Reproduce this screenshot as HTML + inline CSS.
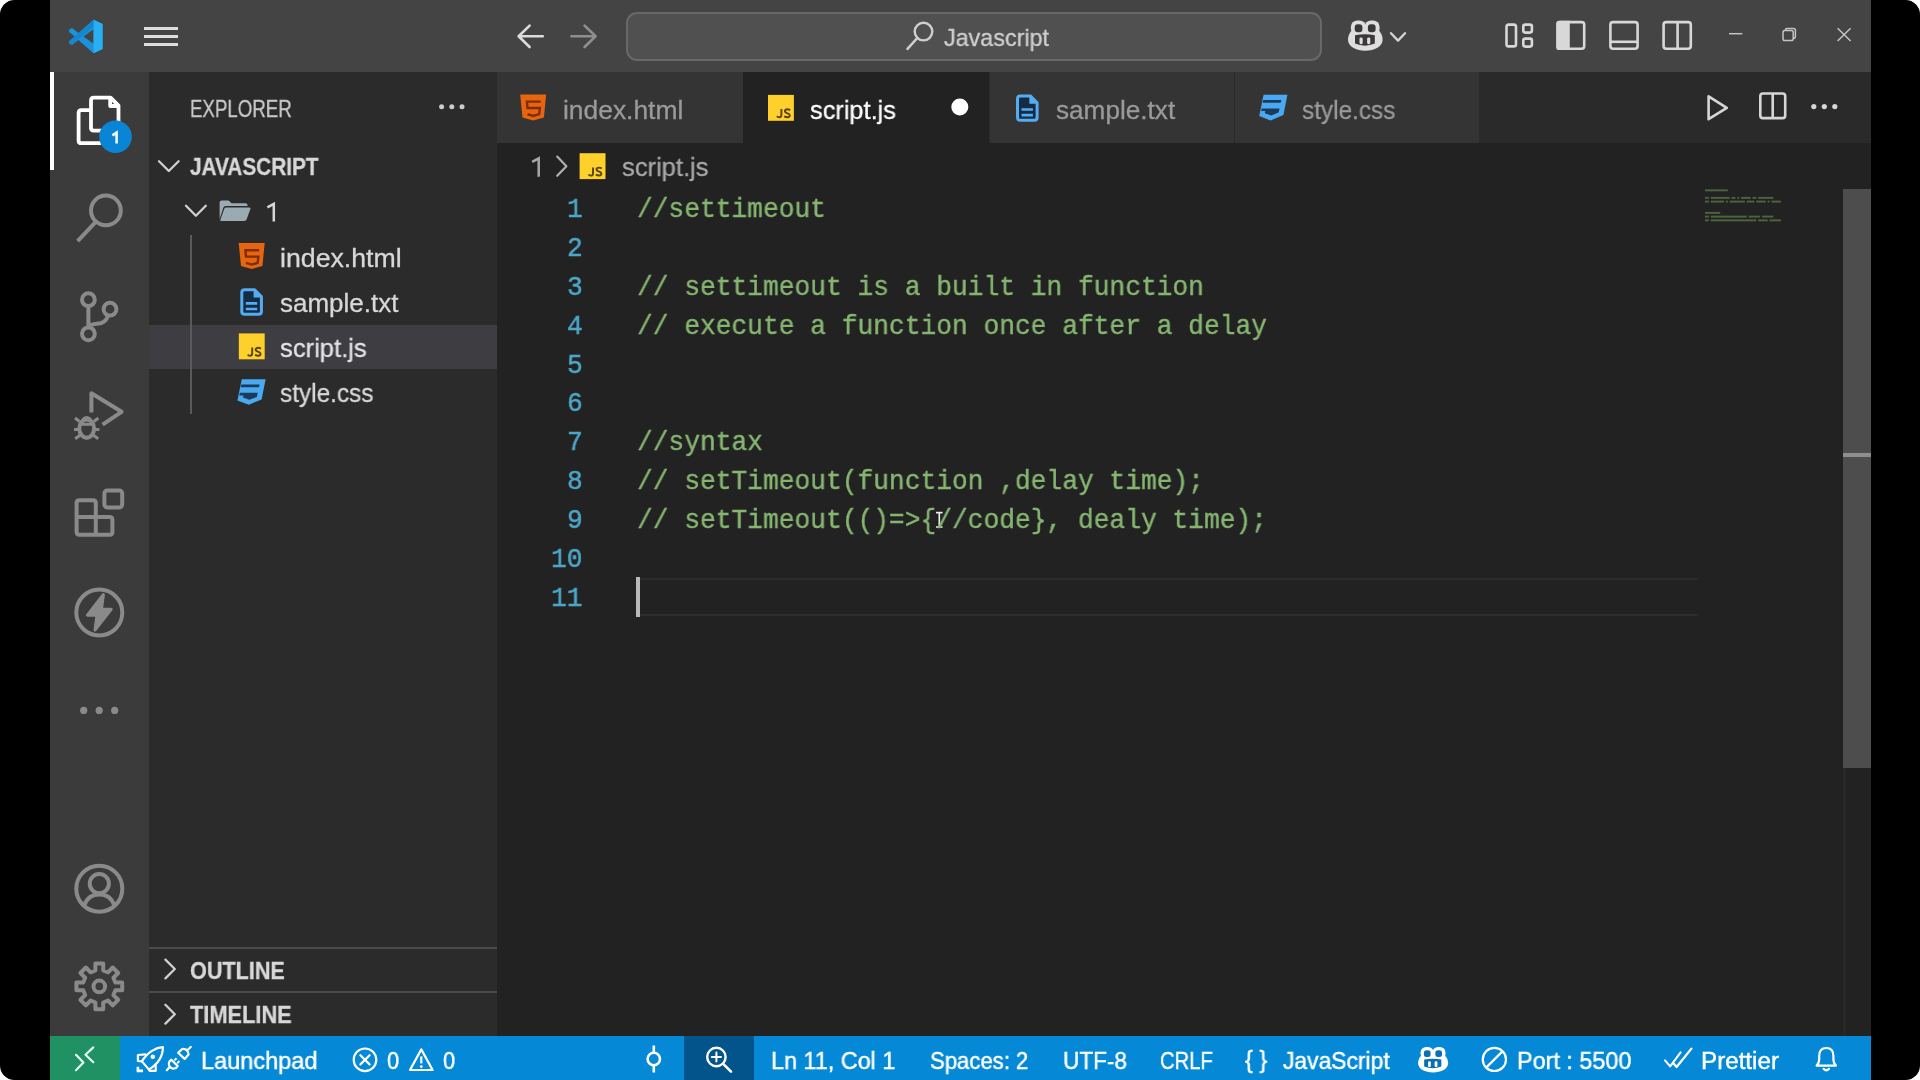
<!DOCTYPE html>
<html><head><meta charset="utf-8">
<style>
*{box-sizing:border-box;margin:0;padding:0}
html,body{width:1920px;height:1080px;overflow:hidden;background:#fff;font-family:"Liberation Sans",sans-serif;}
#frame{position:absolute;left:0;top:0;width:1920px;height:1080px;background:#000;border-radius:14.5px;overflow:hidden}
.abs{position:absolute}
.t{position:absolute;white-space:pre;line-height:1;transform-origin:0 0;will-change:transform}
.code{font-family:"Liberation Mono",monospace;font-size:28px;color:#86b671;-webkit-text-stroke:0.4px #86b671}
.ln{font-family:"Liberation Mono",monospace;font-size:28px;color:#4ca7c8;-webkit-text-stroke:0.5px #4ca7c8}
svg{position:absolute;overflow:visible}
.ic{fill:none;stroke:#8a8a8a;stroke-width:4;stroke-linecap:butt;stroke-linejoin:round}
</style></head><body>
<div id="frame">
<!-- base panels -->
<div class="abs" style="left:50px;top:0;width:1821px;height:1080px;background:#222222"></div>
<div class="abs" style="left:50px;top:0;width:1821px;height:72px;background:#444444"></div>
<div class="abs" style="left:50px;top:72px;width:99px;height:964px;background:#3b3b3b"></div>
<div class="abs" style="left:149px;top:72px;width:348px;height:964px;background:#2b2b2b"></div>
<!-- tab strip -->
<div class="abs" style="left:497px;top:72px;width:1374px;height:71px;background:#2a2a2a"></div>
<div class="abs" style="left:497px;top:72px;width:246px;height:71px;background:#343434"></div>
<div class="abs" style="left:743px;top:72px;width:246px;height:71px;background:#222222"></div>
<div class="abs" style="left:990px;top:72px;width:244px;height:71px;background:#343434"></div>
<div class="abs" style="left:1235px;top:72px;width:244px;height:71px;background:#343434"></div>
<!-- status bar -->
<div class="abs" style="left:50px;top:1036px;width:1821px;height:44px;background:#0589d6"></div>
<div class="abs" style="left:50px;top:1036px;width:70px;height:44px;background:#1f9162"></div>
<div class="abs" style="left:684px;top:1036px;width:70px;height:44px;background:#03548a"></div>
<!-- ===== TITLE BAR ===== -->
<!-- vscode logo -->
<svg style="left:68px;top:19px" width="36" height="35" viewBox="0 0 100 100" preserveAspectRatio="none">
  <path d="M71 2 L96 14 L96 86 L71 98 L29 60 L11 74 L3 69 L3 63 L19 50 L3 37 L3 31 L11 26 L29 40 Z M71 29 L43 50 L71 71 Z" fill="#1a93dc" fill-rule="evenodd"/>
  <path d="M71 2 L96 14 L96 86 L71 98 Z" fill="#29b0f2"/>
  <path d="M3 63 L11 74 L71 22 L71 2 Z" fill="#0f7fc8" opacity=".55"/>
</svg>
<!-- hamburger -->
<div class="abs" style="left:144px;top:27px;width:34px;height:3px;background:#dedede"></div>
<div class="abs" style="left:144px;top:35px;width:34px;height:3px;background:#dedede"></div>
<div class="abs" style="left:144px;top:43.1px;width:34px;height:3px;background:#dedede"></div>
<!-- nav arrows -->
<svg style="left:0;top:0" width="1920" height="72">
  <path d="M542.8 36.3 H519 M529.6 25.6 L518.6 36.3 L529.6 47" fill="none" stroke="#dcdcdc" stroke-width="2.6" stroke-linecap="round" stroke-linejoin="round"/>
  <path d="M571.4 36.3 H595.2 M584.6 25.6 L595.6 36.3 L584.6 47" fill="none" stroke="#8f8f8f" stroke-width="2.6" stroke-linecap="round" stroke-linejoin="round"/>
</svg>
<!-- command center -->
<div class="abs" style="left:626px;top:11.5px;width:696px;height:49.5px;border-radius:11px;background:#505050;border:2px solid #686868"></div>
<svg style="left:0;top:0" width="1920" height="72">
  <circle cx="923.5" cy="31.6" r="8.8" fill="none" stroke="#cfcfcf" stroke-width="2.4"/>
  <path d="M917.3 38 L907.5 48.8" stroke="#cfcfcf" stroke-width="2.6" stroke-linecap="round"/>
</svg>
<!-- copilot + chevron -->
<svg style="left:0;top:0" width="1920" height="72">
  <defs>
  <g id="cop1">
    <rect x="1350.9" y="20.4" width="15" height="14.6" rx="6.4"/>
    <rect x="1364.6" y="20.4" width="15" height="14.6" rx="6.4"/>
    <path d="M1352.6 29.5 C1349.2 32.6 1348 36 1348 39.8 C1348 46.6 1356 50.8 1365.3 50.8 C1374.6 50.8 1382.6 46.6 1382.6 39.8 C1382.6 36 1381.4 32.6 1378 29.5 Z"/>
  </g>
  <g id="cop2">
    <rect x="1354.7" y="24.3" width="7.7" height="7.9" rx="3"/>
    <rect x="1367.9" y="24.3" width="7.7" height="7.9" rx="3"/>
    <path d="M1355 35.2 Q1365 33.4 1374.8 35.2 V43.6 Q1365 47.8 1355 43.6 Z"/>
  </g>
  <g id="cop3">
    <rect x="1359.5" y="37.4" width="3.2" height="6.8" rx="1.4"/>
    <rect x="1367.1" y="37.4" width="3.2" height="6.8" rx="1.4"/>
  </g>
  </defs>
  <use href="#cop1" fill="#dedede"/><use href="#cop2" fill="#3a3838"/><use href="#cop3" fill="#dedede"/>
  <path d="M1391 33.2 L1398 40.6 L1405 33.2" fill="none" stroke="#d4d4d4" stroke-width="2.3" stroke-linecap="round" stroke-linejoin="round"/>
  <!-- layout icons -->
  <g fill="none" stroke="#d8d8d8" stroke-width="2.6">
    <rect x="1506.5" y="24.6" width="9.5" height="21.8" rx="2.2"/>
    <rect x="1523.3" y="24.6" width="8.6" height="8" rx="2"/>
    <rect x="1523.3" y="38.6" width="8.6" height="8" rx="2"/>
    <rect x="1557.6" y="22.1" width="26.6" height="26.6" rx="2.6"/>
    <rect x="1610.4" y="22.1" width="27.2" height="26.6" rx="2.6"/>
    <path d="M1610.4 41.8 H1637.6"/>
    <rect x="1663.6" y="22.1" width="27.2" height="26.6" rx="2.6"/>
    <path d="M1677.6 22.1 V48.7"/>
  </g>
  <path d="M1559 20.8 H1569.8 V50 H1559 Q1556.3 50 1556.3 47.4 V23.4 Q1556.3 20.8 1559 20.8Z" fill="#d8d8d8"/>
  <!-- window controls -->
  <g fill="none" stroke="#c4c4c4" stroke-width="1.5">
    <path d="M1729 33.7 H1742.3"/>
    <rect x="1783" y="30.6" width="10.2" height="10" rx="1.8"/>
    <path d="M1785.4 30.4 V30 Q1785.4 28.4 1787 28.4 H1793.6 Q1795.4 28.4 1795.4 30.2 V36.6 Q1795.4 38.4 1793.6 38.4 H1793.3"/>
    <path d="M1837.6 28.2 L1850.6 41 M1850.6 28.2 L1837.6 41"/>
  </g>
</svg>
<!-- ===== ACTIVITY BAR ===== -->
<div class="abs" style="left:50px;top:72px;width:4px;height:98px;background:#ffffff"></div>
<svg style="left:0;top:0" width="200" height="1080">
  <!-- explorer (active, white) -->
  <g fill="none" stroke="#ffffff" stroke-width="3.8" stroke-linejoin="round">
    <path d="M91 129 V100.5 Q91 97.7 93.8 97.7 H110.6 L118.5 105.6 V127.8 Q118.5 130.6 115.7 130.6 H93.8 Q91 130.6 91 127.8"/>
    <path d="M110.2 98 V106 H118.2"/>
    <path d="M90.5 110.2 H81.4 Q78.6 110.2 78.6 113 V140.4 Q78.6 143.2 81.4 143.2 H101"/>
  </g>
  <circle cx="115.5" cy="136.8" r="16.3" fill="#0a84d4"/>
  <path d="M112.4 135.4 L116.6 132.6 V143.4" fill="none" stroke="#fff" stroke-width="2.5" stroke-linejoin="miter"/>
  <!-- search -->
  <g class="ic">
    <circle cx="105.9" cy="210.4" r="14.9"/>
    <path d="M95.3 222.3 L77.6 241.2"/>
  </g>
  <!-- source control -->
  <g class="ic">
    <circle cx="88.4" cy="299.7" r="6.4"/>
    <circle cx="110" cy="309.2" r="6.4"/>
    <circle cx="88.4" cy="333.8" r="6.4"/>
    <path d="M88.4 306.1 V327.4"/>
    <path d="M108 315.6 Q106 323.5 97 323.8 Q90.5 324 88.6 327.4"/>
  </g>
  <!-- run and debug -->
  <g class="ic">
    <path d="M91.4 412.5 V393.2 L121.6 411.8 L102.6 424.6"/>
    <ellipse cx="86.7" cy="428.6" rx="7.4" ry="9.2"/>
    <path d="M79.4 424.3 H94" stroke-width="3"/>
    <path d="M79.5 421.5 L75 418 M93.9 421.5 L98.4 418 M79 429.6 H74 M94.4 429.6 H99.4 M80 435.3 L75.2 438.8 M93.4 435.3 L98.2 438.8" stroke-width="3"/>
    <path d="M82.5 420 Q86.7 415 90.9 420" stroke-width="3"/>
  </g>
  <!-- extensions -->
  <g class="ic">
    <path d="M76.6 503 Q76.6 500.2 79.4 500.2 H93 Q95.8 500.2 95.8 503 V517 H109.6 Q112.4 517 112.4 519.8 V532 Q112.4 534.8 109.6 534.8 H79.4 Q76.6 534.8 76.6 532 Z"/>
    <path d="M76.6 517 H95.8 V534.8"/>
    <rect x="104.4" y="490.6" width="17.8" height="16.8" rx="2.8"/>
  </g>
  <!-- thunder -->
  <g class="ic">
    <circle cx="99.3" cy="612.5" r="23"/>
  </g>
  <path d="M102.6 594.2 L86.8 614.6 Q86.2 616 87.8 616 H96 L94.2 630 Q94.6 631.6 95.8 630.2 L111.8 609.8 Q112.4 608.4 110.8 608.4 H102.4 L104.2 594.8 Q103.8 593.2 102.6 594.2 Z" fill="#8a8a8a" stroke="#8a8a8a" stroke-width="1.4" stroke-linejoin="round"/>
  <!-- dots -->
  <g fill="#8a8a8a">
    <circle cx="83.7" cy="710.4" r="3.6"/><circle cx="99.2" cy="710.4" r="3.6"/><circle cx="114.7" cy="710.4" r="3.6"/>
  </g>
  <!-- account -->
  <g class="ic">
    <circle cx="99.3" cy="888.7" r="23"/>
    <circle cx="99.3" cy="883.6" r="9.6"/>
    <path d="M84.2 905.6 Q88 894.6 99.3 894.6 Q110.6 894.6 114.4 905.6"/>
  </g>
  <!-- gear -->
  <g class="ic" stroke-linejoin="round">
    <path d="M95.4 970.3 L95.4 963.5 L103.2 963.5 L103.2 970.3 L108.0 972.3 L112.7 967.5 L118.2 973.0 L113.4 977.7 L115.4 982.5 L122.2 982.5 L122.2 990.3 L115.4 990.3 L113.4 995.1 L118.2 999.8 L112.7 1005.3 L108.0 1000.5 L103.2 1002.5 L103.2 1009.3 L95.4 1009.3 L95.4 1002.5 L90.6 1000.5 L85.9 1005.3 L80.4 999.8 L85.2 995.1 L83.2 990.3 L76.4 990.3 L76.4 982.5 L83.2 982.5 L85.2 977.7 L80.4 973.0 L85.9 967.5 L90.6 972.3 Z"/>
    <circle cx="99.3" cy="986.4" r="5.8"/>
  </g>
</svg>

<!-- ===== SIDEBAR ===== -->
<div class="abs" style="left:149px;top:324.5px;width:348px;height:44.5px;background:#3d3d42"></div>
<div class="abs" style="left:190px;top:235px;width:1.6px;height:179px;background:#5a5a5a"></div>
<div class="abs" style="left:149px;top:946.5px;width:348px;height:2px;background:#4b4b4b"></div>
<div class="abs" style="left:149px;top:991px;width:348px;height:2px;background:#4b4b4b"></div>
<svg style="left:0;top:0" width="520" height="1080">
  <g fill="#cccccc"><circle cx="441.6" cy="106.8" r="2.5"/><circle cx="451.8" cy="106.8" r="2.5"/><circle cx="462" cy="106.8" r="2.5"/></g>
  <g fill="none" stroke="#cfcfcf" stroke-width="2.3" stroke-linecap="round" stroke-linejoin="round">
    <path d="M159 161.2 L168.8 171 L178.6 161.2"/>
    <path d="M186 205.8 L195.9 215.8 L205.8 205.8"/>
    <path d="M165.4 959.6 L174.8 969 L165.4 978.4"/>
    <path d="M165.4 1004.8 L174.8 1014.2 L165.4 1023.6"/>
  </g>
  <path d="M267.4 207.4 L273.8 203.9 V221.6" fill="none" stroke="#d6d6d6" stroke-width="2.5" stroke-linejoin="miter"/>
  <!-- folder open -->
  <path d="M219.6 219 V202.6 Q219.6 200.4 221.8 200.4 H228.6 L231.6 203.3 H245.4 Q247.6 203.3 247.6 205.5 V206 H225.6 Q224 206 223.4 207.6 Z" fill="#9aabb3"/>
  <path d="M226.2 207.4 H249.4 Q251 207.4 250.4 209 L246.6 219.6 Q246 221 244.4 221 H221.2 Q219.6 221 220.4 219.4 L224.4 208.6 Q224.8 207.4 226.2 207.4Z" fill="#9aabb3"/>
  <!-- html icon -->
  <g id="ic-html">
    <path d="M238.7 243 H264.7 L262.4 266 L251.7 269 L241 266 Z" fill="#e8650f"/>
    <path d="M259.2 250.2 H245.4 L246 256.6 H258.4 L257.7 262.8 L251.7 264.6 L246 262.8" fill="none" stroke="#7e2c00" stroke-width="2.4"/>
  </g>
  <!-- txt icon -->
  <g id="ic-txt">
    <path d="M244 289.8 H254.6 L261.4 296.6 V311.4 Q261.4 314.2 258.6 314.2 H244.6 Q241.8 314.2 241.8 311.4 V292.6 Q241.8 289.8 244.6 289.8Z" fill="#152c46" stroke="#55acf0" stroke-width="3" stroke-linejoin="round"/>
    <path d="M253.6 289.6 L261.6 297.6 H253.6Z" fill="#55acf0"/>
    <path d="M245.8 303.4 H257.2 M245.8 309 H257.2" stroke="#55acf0" stroke-width="2.6"/>
  </g>
  <!-- js icon -->
  <g id="ic-js">
    <rect x="238.8" y="333.4" width="25.9" height="25.9" fill="#fdd02c"/>
    <path d="M252.2 347.6 V353.6 Q252.2 355.8 250 355.8 Q248.4 355.8 247.8 354.6" fill="none" stroke="#5a4300" stroke-width="1.9"/>
    <path d="M261 348.6 Q257.8 347 256 348.6 Q254.8 350.4 257.8 351.6 Q261.4 352.8 260.4 354.8 Q258.8 356.6 255 354.8" fill="none" stroke="#5a4300" stroke-width="1.9"/>
  </g>
  <!-- css icon -->
  <g id="ic-css">
    <path d="M241.8 379.2 H265.6 L261.6 399.4 L248.8 404.8 L237.4 400.4 Z" fill="#4aa9f0"/>
    <path d="M241.4 384.4 H259.6 L259 387.2 H240.8Z" fill="#1a3c5c"/>
    <path d="M239.8 392.8 H257.8 L256.8 397 L249.4 399.8 L243 397.6 L243.4 395.4 H239.4Z" fill="#1a3c5c"/>
  </g>
</svg>
<!-- ===== EDITOR ===== -->
<svg style="left:0;top:0" width="1920" height="1080">
  <!-- tab icons -->
  <use href="#ic-html" transform="translate(281.5,-148.6)"/>
  <use href="#ic-js" transform="translate(529.2,-238.5)"/>
  <use href="#ic-js" transform="translate(340.8,-180.2)"/>
  <use href="#ic-txt" transform="translate(775.7,-193.9)"/>
  <use href="#ic-css" transform="translate(1021.8,-284.4)"/>
  <circle cx="959.8" cy="107" r="8.5" fill="#ffffff"/>
  <path d="M532.2 161.8 L538.7 158.3 V176.8" fill="none" stroke="#a8a8a8" stroke-width="2.5" stroke-linejoin="miter"/>
  <!-- breadcrumb chevron -->
  <path d="M557.2 156.6 L566.4 166.2 L557.2 175.8" fill="none" stroke="#b0b0b0" stroke-width="2.2" stroke-linecap="round" stroke-linejoin="round"/>
  <!-- editor actions -->
  <g fill="none" stroke="#d6d6d6" stroke-width="2.6" stroke-linejoin="round">
    <path d="M1708.6 96.4 L1726.8 107.8 L1708.6 119.2 Z"/>
    <rect x="1760.3" y="93.5" width="24.9" height="24.6" rx="2.6"/>
    <path d="M1772.7 93.5 V118.1"/>
  </g>
  <g fill="#d6d6d6"><circle cx="1813.8" cy="106.6" r="2.6"/><circle cx="1824.3" cy="106.6" r="2.6"/><circle cx="1834.8" cy="106.6" r="2.6"/></g>
  <!-- minimap -->
  <g fill="#6f9c58" opacity=".55">
    <rect x="1705.0" y="189.40" width="22.8" height="1.9"/>
    <rect x="1705.0" y="196.90" width="3.8" height="1.9"/>
    <rect x="1710.7" y="196.90" width="19.0" height="1.9"/>
    <rect x="1731.6" y="196.90" width="3.8" height="1.9"/>
    <rect x="1737.3" y="196.90" width="1.9" height="1.9"/>
    <rect x="1741.1" y="196.90" width="9.5" height="1.9"/>
    <rect x="1752.5" y="196.90" width="3.8" height="1.9"/>
    <rect x="1758.2" y="196.90" width="15.2" height="1.9"/>
    <rect x="1705.0" y="200.65" width="3.8" height="1.9"/>
    <rect x="1710.7" y="200.65" width="13.3" height="1.9"/>
    <rect x="1725.9" y="200.65" width="1.9" height="1.9"/>
    <rect x="1729.7" y="200.65" width="15.2" height="1.9"/>
    <rect x="1746.8" y="200.65" width="7.6" height="1.9"/>
    <rect x="1756.3" y="200.65" width="9.5" height="1.9"/>
    <rect x="1767.7" y="200.65" width="1.9" height="1.9"/>
    <rect x="1771.5" y="200.65" width="9.5" height="1.9"/>
    <rect x="1705.0" y="211.90" width="15.2" height="1.9"/>
    <rect x="1705.0" y="215.65" width="3.8" height="1.9"/>
    <rect x="1710.7" y="215.65" width="36.1" height="1.9"/>
    <rect x="1748.7" y="215.65" width="11.4" height="1.9"/>
    <rect x="1762.0" y="215.65" width="11.4" height="1.9"/>
    <rect x="1705.0" y="219.40" width="3.8" height="1.9"/>
    <rect x="1710.7" y="219.40" width="45.6" height="1.9"/>
    <rect x="1758.2" y="219.40" width="9.5" height="1.9"/>
    <rect x="1769.6" y="219.40" width="11.4" height="1.9"/>
  </g>
  <!-- mouse I-beam -->
  <g fill="none" stroke="#1a1a1a" stroke-width="3.4" opacity=".8">
    <path d="M936 512.6 H942.6 M939.3 512.6 V527 M936 527 H942.6"/>
  </g>
  <g fill="none" stroke="#ececec" stroke-width="1.7">
    <path d="M936 512.6 H942.6 M939.3 512.6 V527 M936 527 H942.6"/>
  </g>
</svg>
<!-- scrollbar -->
<div class="abs" style="left:1842.5px;top:188.5px;width:3px;height:847.5px;background:#282828"></div>
<div class="abs" style="left:1843px;top:188.5px;width:28px;height:579.5px;background:#4d4d4d"></div>
<div class="abs" style="left:1843px;top:453.3px;width:28px;height:4px;background:#8e8e8e"></div>
<!-- current line -->
<div class="abs" style="left:637px;top:578px;width:1061px;height:2.4px;background:#2d2d2d"></div>
<div class="abs" style="left:637px;top:613.6px;width:1061px;height:2.4px;background:#2d2d2d"></div>
<div class="abs" style="left:636px;top:577.2px;width:4.2px;height:39.8px;background:#b9b9b9"></div>
<!-- ===== STATUS BAR ===== -->
<svg style="left:0;top:0" width="1920" height="1080">
  <g fill="none" stroke="#ffffff" stroke-width="2.2" stroke-linecap="round" stroke-linejoin="round">
    <!-- remote -->
    <path d="M76 1054.8 L83.4 1062.6 L76 1070.2" stroke="#e4fff4"/>
    <path d="M93.3 1047.4 L85.5 1054.8 L93.3 1062.2" stroke="#e4fff4"/>
    <!-- rocket -->
    <path d="M162.9 1047.1 C156 1047.3 147.5 1052 141.9 1061.4 L149 1069.6 C158 1064 163 1055.5 162.9 1047.1 Z"/>
    <path d="M145.4 1054.4 L137.9 1055 V1061 L141.9 1061.4"/>
    <path d="M155.6 1064.4 L155.8 1070.9 H149.6 L149 1069.6"/>
    <path d="M137.9 1066.8 V1070.9 H143" stroke-linecap="butt" stroke-linejoin="miter" stroke-width="2.6"/>
    <!-- plug -->
    <path d="M166.8 1070.2 L169.2 1067.6"/>
    <path d="M171.3 1059.7 L177.7 1066 A4.7 4.7 0 1 1 171.3 1059.7 Z"/>
    <path d="M174.4 1060.4 L176.6 1058.2 M177.2 1063.2 L179.4 1061" stroke-linecap="butt" stroke-width="2"/>
    <path d="M178.1 1052.8 L182.2 1049 Q187.6 1048.4 188.6 1054.4 L184.6 1058.9 Z"/>
    <path d="M187.8 1049.8 L190.8 1047"/>
    <!-- error circle -->
    <circle cx="365" cy="1059.8" r="11.3"/>
    <path d="M360.4 1055.2 L369.6 1064.4 M369.6 1055.2 L360.4 1064.4"/>
    <!-- warning -->
    <path d="M421.3 1049.4 L432.6 1070 H410 Z"/>
    <path d="M421.3 1056.4 V1063.4" stroke-linecap="butt"/>
    <!-- commit -->
    <circle cx="653.8" cy="1059" r="6.2" stroke-width="2.6"/>
    <path d="M653.8 1045.6 V1052.6 M653.8 1065.4 V1072.6" stroke-width="2.6" stroke-linecap="butt"/>
    <!-- zoom -->
    <circle cx="716.4" cy="1057" r="9.2" stroke-width="2.4"/>
    <path d="M723.2 1063.8 L731 1071.6" stroke-width="2.6"/>
    <path d="M711.8 1057 H721 M716.4 1052.4 V1061.6" stroke-width="2"/>
    <!-- circle slash -->
    <circle cx="1494.4" cy="1059.4" r="11.6"/>
    <path d="M1486.4 1067.4 L1502.4 1051.4"/>
    <!-- double check -->
    <path d="M1665 1060.4 L1670.2 1066.4 L1680.6 1052.4" stroke-width="2"/>
    <path d="M1673.6 1063.6 L1676.6 1067 L1691.4 1048.6" stroke-width="2.3"/>
    <!-- bell -->
    <path d="M1816.6 1065.6 H1836 Q1833.4 1063.4 1833.4 1059 V1056 Q1833.4 1048 1826.3 1048 Q1819.2 1048 1819.2 1056 V1059 Q1819.2 1063.4 1816.6 1065.6 Z"/>
    <path d="M1823.6 1068.8 Q1826.3 1071.8 1829 1068.8"/>
  </g>
  <circle cx="152.8" cy="1056.8" r="2.3" fill="#fff"/>
  <circle cx="421.3" cy="1066.6" r="1.4" fill="#fff"/>
  <!-- copilot status -->
  <g transform="translate(1418.1,1047) scale(0.867,0.84) translate(-1348,-20.4)">
    <use href="#cop1" fill="#ffffff"/><use href="#cop2" fill="#0b6fb4"/><use href="#cop3" fill="#ffffff"/>
  </g>
</svg>

<span class="t" style="-webkit-text-stroke:0.3px #d0d0d0;left:944.0px;top:25.7px;font-size:24.0px;color:#d0d0d0;font-weight:400;font-family:'Liberation Sans',sans-serif;transform:scaleX(0.9718)">Javascript</span>
<span class="t" style="-webkit-text-stroke:0.3px #c8c8c8;left:190.1px;top:98.0px;font-size:23.0px;color:#c8c8c8;font-weight:400;font-family:'Liberation Sans',sans-serif;transform:scaleX(0.8119)">EXPLORER</span>
<span class="t" style="-webkit-text-stroke:0.3px #d8d8d8;left:189.5px;top:155.8px;font-size:23.0px;color:#d8d8d8;font-weight:700;font-family:'Liberation Sans',sans-serif;transform:scaleX(0.9031)">JAVASCRIPT</span>
<span class="t" style="-webkit-text-stroke:0.3px #d8d8d8;left:280.3px;top:246.2px;font-size:25.8px;color:#d8d8d8;font-weight:400;font-family:'Liberation Sans',sans-serif;transform:scaleX(1.0351)">index.html</span>
<span class="t" style="-webkit-text-stroke:0.3px #d8d8d8;left:280.3px;top:290.8px;font-size:25.8px;color:#d8d8d8;font-weight:400;font-family:'Liberation Sans',sans-serif;transform:scaleX(1.0080)">sample.txt</span>
<span class="t" style="-webkit-text-stroke:0.3px #e4e4e4;left:280.3px;top:336.2px;font-size:25.8px;color:#e4e4e4;font-weight:400;font-family:'Liberation Sans',sans-serif;transform:scaleX(0.9916)">script.js</span>
<span class="t" style="-webkit-text-stroke:0.3px #d8d8d8;left:280.3px;top:381.1px;font-size:25.8px;color:#d8d8d8;font-weight:400;font-family:'Liberation Sans',sans-serif;transform:scaleX(0.9453)">style.css</span>
<span class="t" style="-webkit-text-stroke:0.3px #d8d8d8;left:189.5px;top:959.8px;font-size:23.0px;color:#d8d8d8;font-weight:700;font-family:'Liberation Sans',sans-serif;transform:scaleX(0.9400)">OUTLINE</span>
<span class="t" style="-webkit-text-stroke:0.3px #d8d8d8;left:190.2px;top:1004.3px;font-size:23.0px;color:#d8d8d8;font-weight:700;font-family:'Liberation Sans',sans-serif;transform:scaleX(0.9474)">TIMELINE</span>
<span class="t" style="-webkit-text-stroke:0.3px #9a9a9a;left:563.4px;top:97.8px;font-size:25.8px;color:#9a9a9a;font-weight:400;font-family:'Liberation Sans',sans-serif;transform:scaleX(1.0231)">index.html</span>
<span class="t" style="-webkit-text-stroke:0.3px #ffffff;left:810.3px;top:97.8px;font-size:25.8px;color:#ffffff;font-weight:400;font-family:'Liberation Sans',sans-serif;transform:scaleX(0.9824)">script.js</span>
<span class="t" style="-webkit-text-stroke:0.3px #9a9a9a;left:1055.8px;top:97.8px;font-size:25.8px;color:#9a9a9a;font-weight:400;font-family:'Liberation Sans',sans-serif;transform:scaleX(1.0139)">sample.txt</span>
<span class="t" style="-webkit-text-stroke:0.3px #9a9a9a;left:1301.8px;top:97.8px;font-size:25.8px;color:#9a9a9a;font-weight:400;font-family:'Liberation Sans',sans-serif;transform:scaleX(0.9443)">style.css</span>
<span class="t" style="-webkit-text-stroke:0.3px #a8a8a8;left:622.0px;top:155.1px;font-size:25.8px;color:#a8a8a8;font-weight:400;font-family:'Liberation Sans',sans-serif;transform:scaleX(0.9893)">script.js</span>
<span class="t" style="-webkit-text-stroke:0.45px #ffffff;left:201.0px;top:1048.8px;font-size:24.2px;color:#ffffff;font-weight:400;font-family:'Liberation Sans',sans-serif;transform:scaleX(0.9731)">Launchpad</span>
<span class="t" style="-webkit-text-stroke:0.45px #ffffff;left:387.3px;top:1048.8px;font-size:24.2px;color:#ffffff;font-weight:400;font-family:'Liberation Sans',sans-serif;transform:scaleX(0.9000)">0</span>
<span class="t" style="-webkit-text-stroke:0.45px #ffffff;left:443.2px;top:1048.8px;font-size:24.2px;color:#ffffff;font-weight:400;font-family:'Liberation Sans',sans-serif;transform:scaleX(0.9000)">0</span>
<span class="t" style="-webkit-text-stroke:0.45px #ffffff;left:770.7px;top:1048.8px;font-size:24.2px;color:#ffffff;font-weight:400;font-family:'Liberation Sans',sans-serif;transform:scaleX(0.9663)">Ln 11, Col 1</span>
<span class="t" style="-webkit-text-stroke:0.45px #ffffff;left:930.0px;top:1048.8px;font-size:24.2px;color:#ffffff;font-weight:400;font-family:'Liberation Sans',sans-serif;transform:scaleX(0.9138)">Spaces: 2</span>
<span class="t" style="-webkit-text-stroke:0.45px #ffffff;left:1062.7px;top:1048.8px;font-size:24.2px;color:#ffffff;font-weight:400;font-family:'Liberation Sans',sans-serif;transform:scaleX(0.9339)">UTF-8</span>
<span class="t" style="-webkit-text-stroke:0.45px #ffffff;left:1160.0px;top:1048.8px;font-size:24.2px;color:#ffffff;font-weight:400;font-family:'Liberation Sans',sans-serif;transform:scaleX(0.8342)">CRLF</span>
<span class="t" style="-webkit-text-stroke:0.45px #ffffff;left:1245.0px;top:1048.1px;font-size:24.2px;color:#ffffff;font-weight:400;font-family:'Liberation Sans',sans-serif;transform:scaleX(0.9742)">{ }</span>
<span class="t" style="-webkit-text-stroke:0.45px #ffffff;left:1283.3px;top:1048.8px;font-size:24.2px;color:#ffffff;font-weight:400;font-family:'Liberation Sans',sans-serif;transform:scaleX(0.9449)">JavaScript</span>
<span class="t" style="-webkit-text-stroke:0.45px #ffffff;left:1516.7px;top:1048.8px;font-size:24.2px;color:#ffffff;font-weight:400;font-family:'Liberation Sans',sans-serif;transform:scaleX(0.9660)">Port : 5500</span>
<span class="t" style="-webkit-text-stroke:0.45px #ffffff;left:1700.7px;top:1048.8px;font-size:24.2px;color:#ffffff;font-weight:400;font-family:'Liberation Sans',sans-serif;transform:scaleX(0.9953)">Prettier</span>
<span class="t ln" style="left:566.8px;top:195.9px;transform:scaleX(0.9373)">1</span>
<span class="t code" style="left:637.0px;top:195.9px;transform:scaleX(0.9373)">//settimeout</span>
<span class="t ln" style="left:566.8px;top:234.8px;transform:scaleX(0.9373)">2</span>
<span class="t ln" style="left:566.8px;top:273.7px;transform:scaleX(0.9373)">3</span>
<span class="t code" style="left:637.0px;top:273.7px;transform:scaleX(0.9373)">// settimeout is a built in function</span>
<span class="t ln" style="left:566.8px;top:312.6px;transform:scaleX(0.9373)">4</span>
<span class="t code" style="left:637.0px;top:312.6px;transform:scaleX(0.9373)">// execute a function once after a delay</span>
<span class="t ln" style="left:566.8px;top:351.5px;transform:scaleX(0.9373)">5</span>
<span class="t ln" style="left:566.8px;top:390.4px;transform:scaleX(0.9373)">6</span>
<span class="t ln" style="left:566.8px;top:429.3px;transform:scaleX(0.9373)">7</span>
<span class="t code" style="left:637.0px;top:429.3px;transform:scaleX(0.9373)">//syntax</span>
<span class="t ln" style="left:566.8px;top:468.2px;transform:scaleX(0.9373)">8</span>
<span class="t code" style="left:637.0px;top:468.2px;transform:scaleX(0.9373)">// setTimeout(function ,delay time);</span>
<span class="t ln" style="left:566.8px;top:507.1px;transform:scaleX(0.9373)">9</span>
<span class="t code" style="left:637.0px;top:507.1px;transform:scaleX(0.9373)">// setTimeout(()=&gt;{//code}, dealy time);</span>
<span class="t ln" style="left:551.0px;top:546.0px;transform:scaleX(0.9373)">10</span>
<span class="t ln" style="left:551.0px;top:584.9px;transform:scaleX(0.9373)">11</span>
</div>
</body></html>
